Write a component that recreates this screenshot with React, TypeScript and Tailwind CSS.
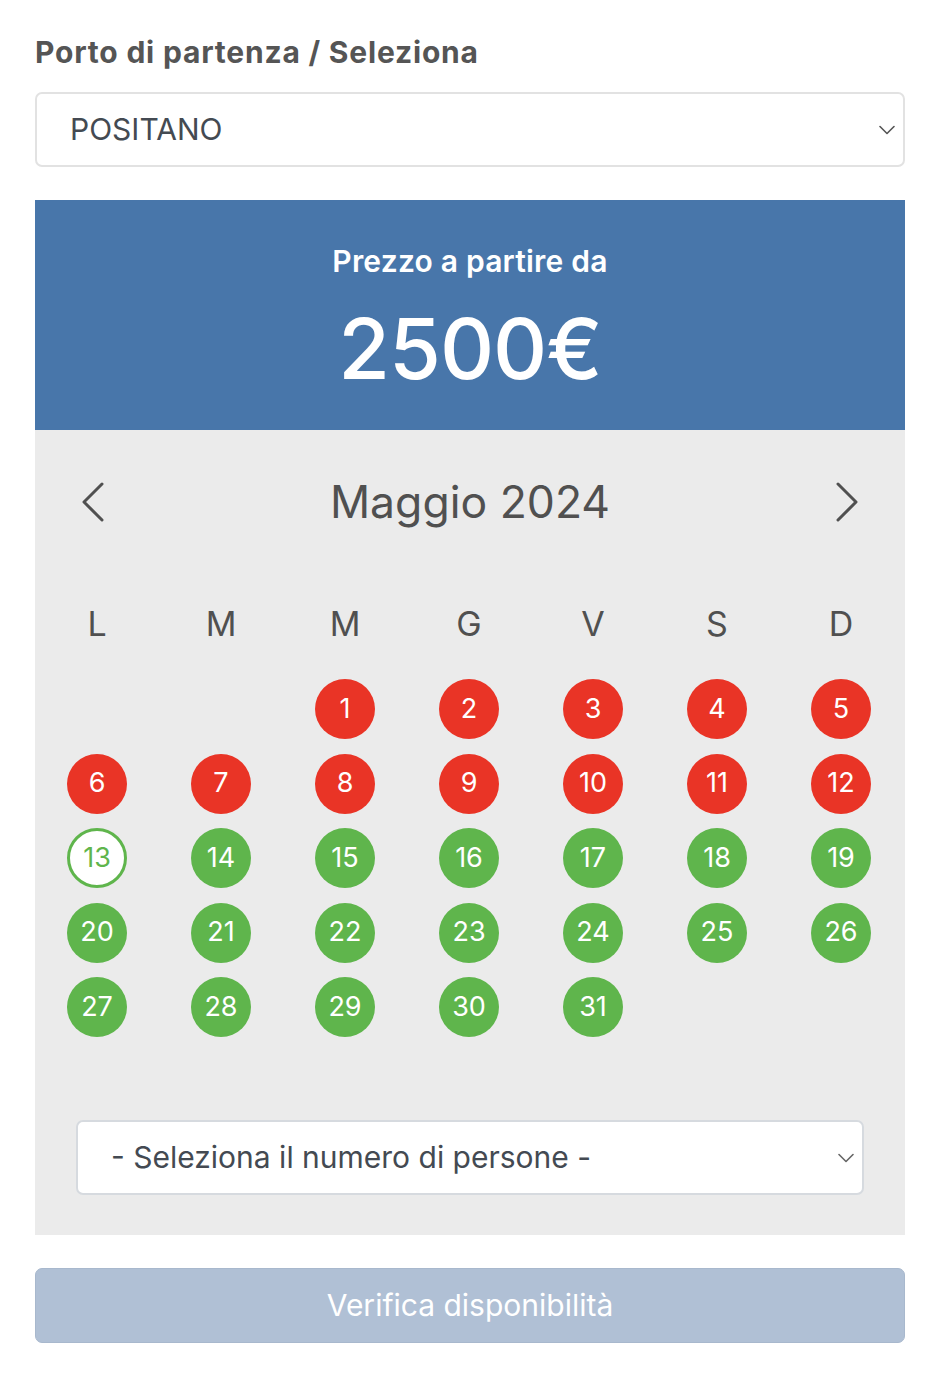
import React from "react";

const font = { fontFamily: "Inter, 'Noto Sans', sans-serif" };

function Chevron({ className }: { className?: string }) {
  return (
    <svg className={className} viewBox="0 0 16 10" fill="none" stroke="currentColor" strokeWidth="1.6" strokeLinecap="round" strokeLinejoin="round">
      <path d="M1 1.5 L8 8.5 L15 1.5" />
    </svg>
  );
}

const red = [1, 2, 3, 4, 5, 6, 7, 8, 9, 10, 11, 12];

export default function App() {
  const cells: (number | null)[] = [null, null];
  for (let d = 1; d <= 31; d++) cells.push(d);

  return (
    <div className="min-h-[1386px] bg-white px-[35px] pt-[35px]" style={font}>
      <div className="text-[30px] leading-[34px] font-bold text-[#555555] tracking-[0.8px]">Porto di partenza / Seleziona</div>

      <div className="mt-[23px] h-[75px] rounded-[7px] border-2 border-[#e2e2e2] bg-white flex items-center justify-between pl-[33px] pr-[8px]">
        <span className="text-[30px] text-[#444a52]">POSITANO</span>
        <Chevron className="w-[16px] h-[10px] text-[#555]" />
      </div>

      <div className="mt-[33px] h-[230px] bg-[#4876aa] flex flex-col items-center text-white">
        <div className="mt-[42px] text-[30px] leading-[38px] font-semibold tracking-[0.2px]">Prezzo a partire da</div>
        <div className="mt-[19px] text-[84px] leading-[100px] font-medium tracking-[-1px]">2500€</div>
      </div>

      <div className="h-[805px] bg-[#ebebeb] flex flex-col">
        <div className="mt-[46px] h-[52px] flex items-center justify-between px-[46px] text-[#505050]">
          <svg className="w-[24px] h-[40px]" viewBox="0 0 24 40" fill="none" stroke="currentColor" strokeWidth="3" strokeLinecap="round" strokeLinejoin="round">
            <path d="M21 2 L3 20 L21 38" />
          </svg>
          <span className="text-[44.5px] leading-[52px] text-[#505050]">Maggio 2024</span>
          <svg className="w-[24px] h-[40px]" viewBox="0 0 24 40" fill="none" stroke="currentColor" strokeWidth="3" strokeLinecap="round" strokeLinejoin="round">
            <path d="M3 2 L21 20 L3 38" />
          </svg>
        </div>

        <div className="mt-[76px] grid grid-cols-7 pr-[2px]">
          {["L", "M", "M", "G", "V", "S", "D"].map((d, i) => (
            <div key={i} className="text-center text-[34px] leading-[40px] text-[#505050]">{d}</div>
          ))}
        </div>

        <div className="mt-[35px] grid grid-cols-7 gap-y-[14.5px] pr-[2px]">
          {cells.map((d, i) => (
            <div key={i} className="flex justify-center h-[60px]">
              {d === null ? null : d === 13 ? (
                <div className="w-[60px] h-[60px] rounded-full bg-white border-[3px] border-[#5fb54c] text-[#5fb54c] flex items-center justify-center text-[27px]">13</div>
              ) : (
                <div className={`w-[60px] h-[60px] rounded-full flex items-center justify-center text-[27px] text-white ${red.includes(d) ? "bg-[#e93426]" : "bg-[#5fb54c]"}`}>{d}</div>
              )}
            </div>
          ))}
        </div>

        <div className="mx-[41px] mt-[83px] h-[75px] rounded-[7px] border-2 border-[#d6dadf] bg-white flex items-center justify-between pl-[33px] pr-[8px]">
          <span className="text-[30px] text-[#444a52]">- Seleziona il numero di persone -</span>
          <Chevron className="w-[16px] h-[10px] text-[#666]" />
        </div>
      </div>

      <div className="mt-[33px] h-[75px] rounded-[7px] bg-[#b0c0d5] border border-[#a8b8cd] flex items-center justify-center">
        <span className="text-[30px] text-white">Verifica disponibilità</span>
      </div>
    </div>
  );
}
